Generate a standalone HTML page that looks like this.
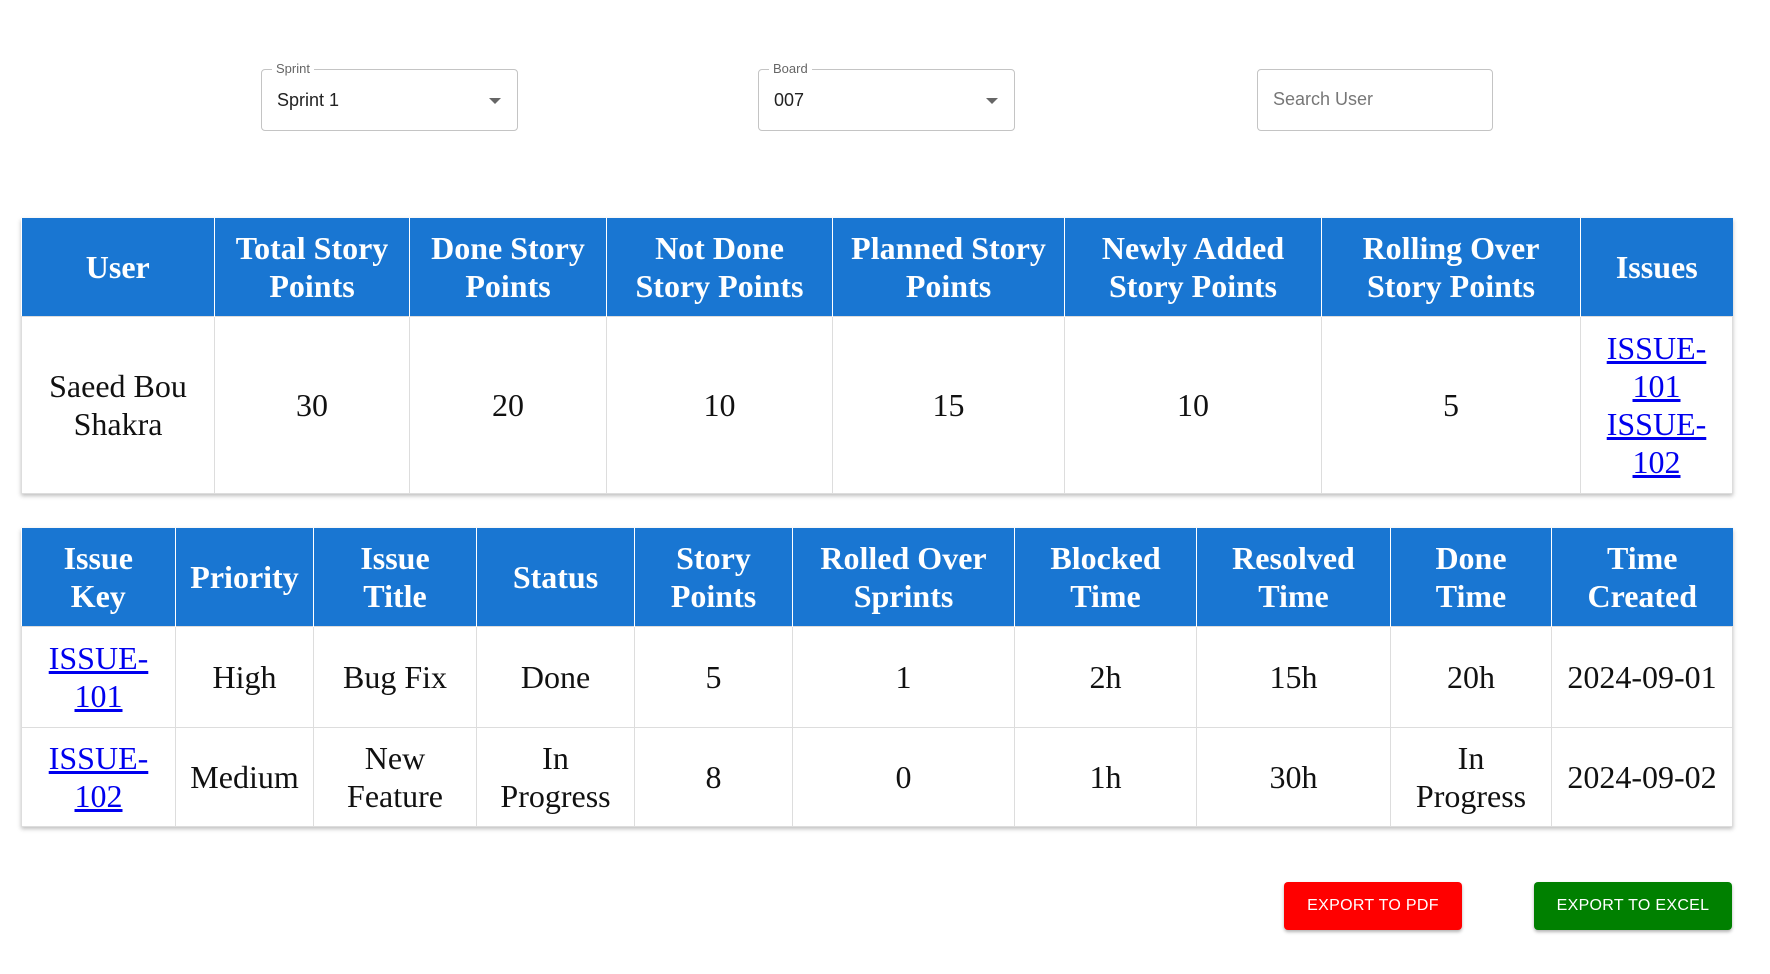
<!DOCTYPE html>
<html><head><meta charset="utf-8"><style>
body{margin:0;width:1770px;height:974px;background:#fff;position:relative;overflow:hidden;font-family:"Liberation Sans",sans-serif}
.fld{position:absolute;top:69px;height:62px;border:1px solid #c4c4c4;border-radius:4px;box-sizing:border-box}
.fld .lab{position:absolute;top:-9px;left:10px;background:#fff;padding:0 4px;font-size:13px;color:#666}
.fld .val{position:absolute;left:15px;top:20px;font-size:18px;color:#222}
.fld .arr{position:absolute;right:16px;top:28px;width:0;height:0;border-left:6px solid transparent;border-right:6px solid transparent;border-top:6px solid #666}
table{position:absolute;left:21px;width:1711px;border-collapse:collapse;font-family:"Liberation Serif",serif;font-size:32px;box-shadow:0 2px 4px rgba(0,0,0,.25);table-layout:fixed}
th{background:#1976d2;color:#fff;font-weight:bold;line-height:38px;border-left:1px solid #fff;padding:0 2px;white-space:nowrap}
td{border:1px solid #ddd;text-align:center;line-height:38px;color:#111;padding:0 2px;white-space:nowrap}
th:first-child{border-left:none}
a{color:#0000ee;text-decoration:underline}
.btn{position:absolute;top:882px;height:48px;color:#fff;font-size:16px;border-radius:4px;display:flex;align-items:center;justify-content:center;box-shadow:0 2px 3px rgba(0,0,0,.3);letter-spacing:.3px}
</style></head><body>
<div class="fld" style="left:261px;width:257px"><span class="lab">Sprint</span><span class="val">Sprint 1</span><span class="arr"></span></div>
<div class="fld" style="left:758px;width:257px"><span class="lab">Board</span><span class="val">007</span><span class="arr"></span></div>
<div class="fld" style="left:1257px;width:236px"><span class="val" style="color:#777;top:19px">Search User</span></div>

<table style="top:218px">
<colgroup><col style="width:193px"><col style="width:195px"><col style="width:197px"><col style="width:226px"><col style="width:232px"><col style="width:257px"><col style="width:259px"><col style="width:152px"></colgroup>
<tr style="height:98px"><th>User</th><th>Total Story<br>Points</th><th>Done Story<br>Points</th><th>Not Done<br>Story Points</th><th>Planned Story<br>Points</th><th>Newly Added<br>Story Points</th><th>Rolling Over<br>Story Points</th><th>Issues</th></tr>
<tr style="height:177px"><td>Saeed Bou<br>Shakra</td><td>30</td><td>20</td><td>10</td><td>15</td><td>10</td><td>5</td><td><a>ISSUE-<br>101</a><br><a>ISSUE-<br>102</a></td></tr>
</table>

<table style="top:528px">
<colgroup><col style="width:154px"><col style="width:138px"><col style="width:163px"><col style="width:158px"><col style="width:158px"><col style="width:222px"><col style="width:182px"><col style="width:194px"><col style="width:161px"><col style="width:181px"></colgroup>
<tr style="height:98px"><th>Issue<br>Key</th><th>Priority</th><th>Issue<br>Title</th><th>Status</th><th>Story<br>Points</th><th>Rolled Over<br>Sprints</th><th>Blocked<br>Time</th><th>Resolved<br>Time</th><th>Done<br>Time</th><th>Time<br>Created</th></tr>
<tr style="height:101px"><td><a>ISSUE-<br>101</a></td><td>High</td><td>Bug Fix</td><td>Done</td><td>5</td><td>1</td><td>2h</td><td>15h</td><td>20h</td><td>2024-09-01</td></tr>
<tr style="height:99px"><td><a>ISSUE-<br>102</a></td><td>Medium</td><td>New<br>Feature</td><td>In<br>Progress</td><td>8</td><td>0</td><td>1h</td><td>30h</td><td>In<br>Progress</td><td>2024-09-02</td></tr>
</table>

<div class="btn" style="left:1284px;width:178px;background:#ff0000">EXPORT TO PDF</div>
<div class="btn" style="left:1534px;width:198px;background:#008000">EXPORT TO EXCEL</div>
</body></html>
